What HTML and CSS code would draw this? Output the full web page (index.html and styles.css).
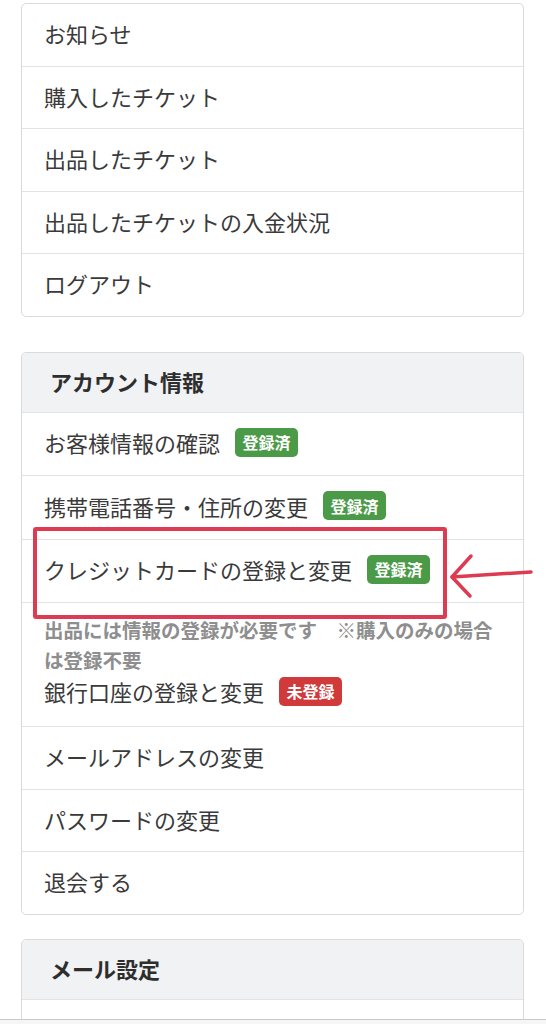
FILE: index.html
```html
<!DOCTYPE html>
<html lang="ja">
<head>
<meta charset="utf-8">
<title>マイページ</title>
<link rel="stylesheet" href="styles.css">
</head>
<body>
<div class="page">
  <div class="card card--menu">
    <div class="item">お知らせ</div>
    <div class="item">購入したチケット</div>
    <div class="item">出品したチケット</div>
    <div class="item">出品したチケットの入金状況</div>
    <div class="item">ログアウト</div>
  </div>

  <div class="card card--account">
    <div class="card-header">アカウント情報</div>
    <div class="item item--badge">お客様情報の確認<span class="badge badge--ok">登録済</span></div>
    <div class="item item--badge">携帯電話番号・住所の変更<span class="badge badge--ok">登録済</span></div>
    <div class="item item--badge">クレジットカードの登録と変更<span class="badge badge--ok">登録済</span></div>
    <div class="item item--note">
      <p class="note">出品には情報の登録が必要です　※購入のみの場合は登録不要</p>
      <div class="bank">銀行口座の登録と変更<span class="badge badge--ng">未登録</span></div>
    </div>
    <div class="item">メールアドレスの変更</div>
    <div class="item">パスワードの変更</div>
    <div class="item">退会する</div>
  </div>

  <div class="card">
    <div class="card-header">メール設定</div>
    <div class="item item--empty"></div>
  </div>

  <div class="highlight"></div>
  <svg class="arrow" width="95" height="55" viewBox="0 0 95 55">
    <path d="M7 27 C 30 25.5, 60 23.5, 86 22" />
    <path d="M26 6 L7 27 L25 46" />
  </svg>
</div>
<div class="toolbar"></div>
</body>
</html>
```

FILE: styles.css
```css
html, body {
  margin: 0;
  padding: 0;
  background: #ffffff;
}

body {
  font-family: "Noto Sans CJK JP", "Noto Sans", sans-serif;
  color: #3a3a3a;
}

.page {
  position: relative;
  padding: 3px 22px 0 21px;
}

.card {
  border: 1px solid #dadada;
  border-radius: 5px;
  overflow: hidden;
  background: #ffffff;
}

.card--menu {
  margin-bottom: 35px;
}

.card--account {
  margin-bottom: 24px;
}

.card-header {
  display: flex;
  align-items: center;
  height: 56px;
  padding: 0 28px 3px;
  background: #f1f2f4;
  font-size: 22px;
  font-weight: 700;
  color: #2e2e2e;
}

.item {
  display: flex;
  align-items: center;
  gap: 15px;
  min-height: 58.5px;
  padding: 0 22px 3px;
  font-size: 22px;
  line-height: 30px;
  border-top: 1px solid #e3e3e3;
}

.card--menu .item:first-child {
  border-top: 0;
}

.item--badge {
  min-height: 59.5px;
}

.item--empty {
  min-height: 60px;
}

.item--note {
  flex-direction: column;
  align-items: flex-start;
  gap: 0;
  min-height: 0;
  padding: 12px 22px 19px;
}

.note {
  margin: 0;
  font-size: 19.5px;
  line-height: 30px;
  font-weight: 700;
  color: #8e8e8e;
}

.bank {
  display: flex;
  align-items: center;
  gap: 15px;
  line-height: 32px;
}

.badge {
  display: inline-flex;
  align-items: center;
  height: 29px;
  padding: 0 7.5px;
  border-radius: 5px;
  font-size: 16px;
  font-weight: 700;
  line-height: 1;
  color: #ffffff;
}

.badge--ok {
  background: #4b9a48;
}

.badge--ng {
  background: #d03a3a;
}

.highlight {
  position: absolute;
  left: 32.5px;
  top: 526.5px;
  width: 414px;
  height: 92px;
  box-sizing: border-box;
  border: 4px solid #dc3b52;
  border-radius: 3px;
}

.arrow {
  position: absolute;
  left: 445px;
  top: 550px;
  overflow: visible;
}

.arrow path {
  fill: none;
  stroke: #dc3b52;
  stroke-width: 3.5;
  stroke-linecap: round;
  stroke-linejoin: round;
}

.toolbar {
  position: fixed;
  left: 0;
  right: 0;
  bottom: 0;
  height: 4px;
  border-top: 1px solid #c9c9c9;
  background: #f6f6f6;
}
```
